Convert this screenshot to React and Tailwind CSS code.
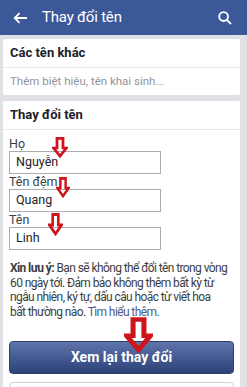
import React from "react";

const DownArrow = ({ className, w = 16, h = 22 }) => (
  <svg
    className={className}
    width={w}
    height={h}
    viewBox="0 0 16 22"
    preserveAspectRatio="none"
  >
    <path
      d="M5 1.5h6v10h3.5L8 20 1.5 11.5H5z"
      fill="none"
      stroke="#d0141c"
      strokeWidth="2.8"
      strokeLinejoin="miter"
    />
  </svg>
);

const Field = ({ label, value }) => (
  <div className="flex flex-col">
    <div className="text-[12.5px] leading-[15px] text-[#3b3e44]">{label}</div>
    <div className="w-[152px] h-[23px] border border-[#a9abaf] bg-white flex items-center pl-[6px] text-[12.5px] text-[#1d2129]">
      {value}
    </div>
  </div>
);

export default function App() {
  return (
    <div
      className="w-[247px] h-[387px] overflow-hidden bg-[#dfe1e5] relative"
      style={{ fontFamily: "Roboto, 'Noto Sans', sans-serif" }}
    >
      {/* Header */}
      <div className="h-[35px] bg-[#3b5998] flex items-center px-[13px] text-white">
        <svg width="15" height="12" viewBox="0 0 15 12" className="shrink-0">
          <path d="M14 6H2M6.5 1.2 1.7 6l4.8 4.8" fill="none" stroke="white" strokeWidth="1.8" />
        </svg>
        <span className="ml-[14px] text-[15px] tracking-[-0.2px]">Thay đổi tên</span>
        <svg width="14" height="14" viewBox="0 0 14 14" className="ml-auto mr-[2px]">
          <circle cx="5.6" cy="5.6" r="4.4" fill="none" stroke="white" strokeWidth="1.8" />
          <path d="M8.8 8.8 13 13" stroke="white" strokeWidth="1.9" />
        </svg>
      </div>

      <div className="flex flex-col gap-[6px] pt-[4px] pl-[3px] pr-[7px]">
        {/* Other names */}
        <div className="bg-white rounded-[2px]">
          <div className="h-[28px] flex items-center px-[7px] text-[13px] font-bold text-[#1d2129]">
            Các tên khác
          </div>
          <div className="border-t border-[#e5e6e9] h-[28px] flex items-center px-[7px] text-[11.5px] text-[#90949c]">
            Thêm biệt hiệu, tên khai sinh...
          </div>
        </div>

        {/* Change name */}
        <div className="bg-white rounded-t-[2px] h-[300px]">
          <div className="h-[28px] flex items-center px-[7px] text-[13px] font-bold text-[#1d2129]">
            Thay đổi tên
          </div>
          <div className="border-t border-[#e5e6e9] px-[6px] pt-[6px] flex flex-col">
            <Field label="Họ" value="Nguyễn" />
            <Field label="Tên đệm" value="Quang" />
            <Field label="Tên" value="Linh" />
            <div className="mt-[11px] px-[1px] text-[12px] leading-[14.5px] text-[#3b3e44] tracking-[-0.6px] whitespace-nowrap">
              <div>
                <span className="font-bold">Xin lưu ý:</span> Bạn sẽ không thể đổi tên trong vòng
              </div>
              <div>60 ngày tới. Đảm bảo không thêm bất kỳ từ</div>
              <div>ngẫu nhiên, ký tự, dấu câu hoặc từ viết hoa</div>
              <div>
                bất thường nào. <span className="text-[#4a5d8c]">Tìm hiểu thêm.</span>
              </div>
            </div>
            <button className="mt-[22px] h-[33px] w-[225px] rounded-[4px] bg-gradient-to-b from-[#5f74ab] to-[#2c4277] text-white font-bold text-[14px] border border-[#2a3e6e]">
              Xem lại thay đổi
            </button>
            <div className="mt-[8px] h-[20px] w-[225px] border border-[#ccd0d5] rounded-[4px]" />
          </div>
        </div>
      </div>

      {/* Red annotation arrows */}
      <DownArrow className="absolute left-[52px] top-[137px]" w={16} h={21} />
      <DownArrow className="absolute left-[56px] top-[177px]" w={14} h={21} />
      <DownArrow className="absolute left-[48px] top-[213px]" w={15} h={23} />
      <DownArrow className="absolute left-[124px] top-[317px]" w={29} h={36} />
    </div>
  );
}
